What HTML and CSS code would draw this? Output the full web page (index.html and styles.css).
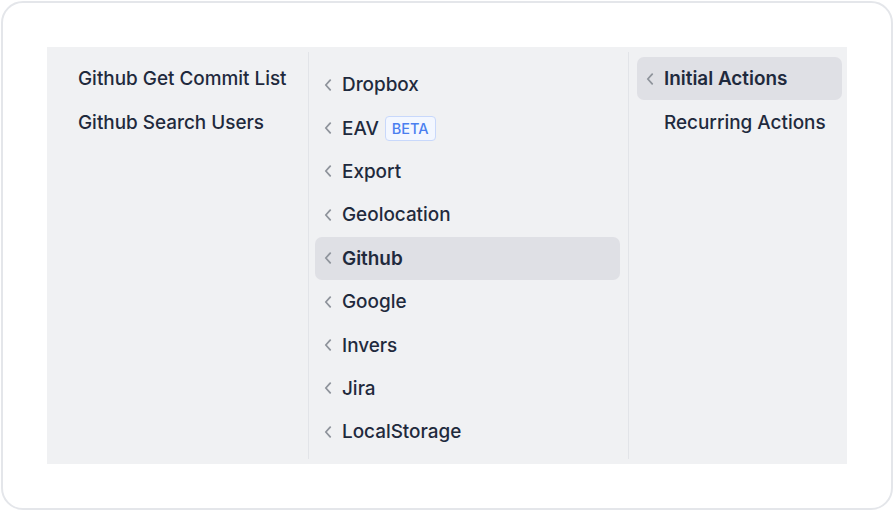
FILE: index.html
```html
<!DOCTYPE html>
<html>
<head>
	<title>Actions</title>
	<link rel="stylesheet" href="styles.css">
</head>
<body>
<div class="card">
	<div class="panel">
		<div class="col col-1">
			<div class="item">Github Get Commit List</div>
			<div class="item">Github Search Users</div>
		</div>
		<div class="col col-2">
			<div class="item"><svg class="chev" viewBox="0 0 8 12"><path d="M6.2 1.2 L1.8 6 L6.2 10.8"/></svg>Dropbox</div>
			<div class="item"><svg class="chev" viewBox="0 0 8 12"><path d="M6.2 1.2 L1.8 6 L6.2 10.8"/></svg>EAV<span class="badge">BETA</span></div>
			<div class="item"><svg class="chev" viewBox="0 0 8 12"><path d="M6.2 1.2 L1.8 6 L6.2 10.8"/></svg>Export</div>
			<div class="item"><svg class="chev" viewBox="0 0 8 12"><path d="M6.2 1.2 L1.8 6 L6.2 10.8"/></svg>Geolocation</div>
			<div class="item active"><svg class="chev" viewBox="0 0 8 12"><path d="M6.2 1.2 L1.8 6 L6.2 10.8"/></svg>Github</div>
			<div class="item"><svg class="chev" viewBox="0 0 8 12"><path d="M6.2 1.2 L1.8 6 L6.2 10.8"/></svg>Google</div>
			<div class="item"><svg class="chev" viewBox="0 0 8 12"><path d="M6.2 1.2 L1.8 6 L6.2 10.8"/></svg>Invers</div>
			<div class="item"><svg class="chev" viewBox="0 0 8 12"><path d="M6.2 1.2 L1.8 6 L6.2 10.8"/></svg>Jira</div>
			<div class="item"><svg class="chev" viewBox="0 0 8 12"><path d="M6.2 1.2 L1.8 6 L6.2 10.8"/></svg>LocalStorage</div>
		</div>
		<div class="col col-3">
			<div class="item active"><svg class="chev" viewBox="0 0 8 12"><path d="M6.2 1.2 L1.8 6 L6.2 10.8"/></svg>Initial Actions</div>
			<div class="item"><span class="chev-space"></span>Recurring Actions</div>
		</div>
	</div>
</div>
</body>
</html>
```

FILE: styles.css
```css
* {
	margin: 0;
	padding: 0;
	box-sizing: border-box;
}
body {
	padding: 1px;
	background: #fff;
	font-family: Inter, "Noto Sans", sans-serif;
	color: #1f2a3d;
}
.card {
	width: 892px;
	height: 509px;
	padding: 44px;
	border: 2px solid #e4e6ea;
	border-radius: 22px;
	background: #fff;
}
.panel {
	display: flex;
	height: 417px;
	background: #f0f1f3;
}
.col {
	margin: 5px 0;
	overflow: hidden;
}
.col-1 {
	width: 262px;
	padding: 5px 5px 0 5px;
	border-right: 1px solid #e2e4e8;
}
.col-2 {
	width: 320px;
	padding: 11px 8px 0 6px;
	border-right: 1px solid #e2e4e8;
}
.col-3 {
	flex: 1;
	padding: 5px 5px 0 8px;
}
.item {
	display: flex;
	align-items: center;
	height: 43.4px;
	padding-left: 10px;
	border-radius: 7px;
	font-size: 18.9px;
	font-weight: 500;
	white-space: nowrap;
}
.col-1 .item {
	padding-left: 26px;
}
.col-2 .item {
	padding-left: 9px;
}
.col-3 .item {
	padding-left: 9px;
}
.item.active {
	background: #dfe0e5;
	font-weight: 600;
}
.chev {
	width: 8px;
	height: 12px;
	margin-right: 10px;
	flex: none;
	fill: none;
	stroke: #8f949c;
	stroke-width: 1.8;
	stroke-linecap: round;
	stroke-linejoin: round;
}
.chev-space {
	width: 18px;
	flex: none;
}
.badge {
	display: inline-flex;
	align-items: center;
	height: 25px;
	margin-left: 6px;
	padding: 0 6px;
	border: 1px solid #c8d8fb;
	border-radius: 4px;
	background: #f3f7ff;
	color: #4a7ff0;
	font-size: 14.5px;
	font-weight: 500;
}
```
